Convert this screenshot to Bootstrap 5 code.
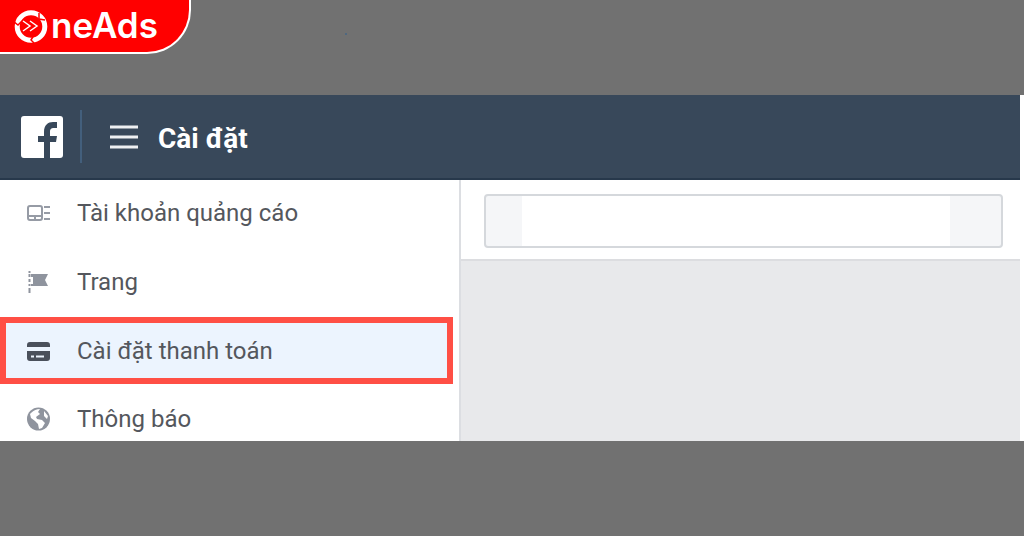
<!DOCTYPE html>
<html lang="vi">
<head>
<meta charset="utf-8">
<meta name="viewport" content="width=device-width, initial-scale=1">
<title>Cài đặt</title>
<link href="https://cdn.jsdelivr.net/npm/bootstrap@5.3.0/dist/css/bootstrap.min.css" rel="stylesheet">
<style>
  body { background: #717171; font-family: Roboto, "Liberation Sans", sans-serif; }
  .brand-strip { height: 95px; }
  .brand-tab { background: #f00; border: solid #fff; border-width: 0 2px 2px 0; border-radius: 0 0 44px 0; height: 54px; width: 191px; padding-left: 13px; color: #fff; font: 600 35px/50px Inter, sans-serif; }
  .brand-tab svg { margin-top: 8px; }
  .brand-tab span { margin-left: 2px; }
  .strip-dot { width: 2px; height: 2px; margin: 33px 0 0 154px; background: #4f6880; }
  .panel { border-right: 4px solid #fff; background: #fff; }
  .topbar { background: #38485a; border-bottom: 2px solid #27384b; height: 85px; padding-left: 20px; }
  .topbar-rule { width: 2px; height: 53px; background: #435f7c; margin: 0 28px 0 16px; }
  .menu-btn { line-height: 0; margin-right: 20px; }
  .topbar h1 { font-size: 28px; line-height: 36px; padding-top: 4px; color: #fff; }
  .side { width: 45.2%; border-right: 2px solid #dcdee2; }
  .side a { height: 69px; padding: 0 26px 2px; gap: 26px; color: #54575d; font-size: 24px; }
  .side a:first-child { height: 68px; }
  .side a.active { height: 67px; margin: 0 6px 2px 0; padding: 0 20px; border: 6px solid #ff4f45; background: #ecf4fe; }
  .side a:last-child { height: 55px; padding-bottom: 0; padding-top: 10px; }
  .search-row { padding: 14px 17px 11px 23px; border-bottom: 2px solid #dcdde0; }
  .search-row .input-group { height: 54px; border: 2px solid #d5d8dc; border-radius: 4px; overflow: hidden; background: #f5f6f8; }
  .search-row .form-control { margin: 0 51px 0 36px; }
  .main-area { background: #e8e9eb; }
</style>
</head>
<body class="min-vh-100">
<header class="brand-strip d-flex align-items-start">
  <div class="brand-tab d-flex align-items-start">
    <svg width="36" height="36" viewBox="0 0 36 36" fill="none" stroke="#fff" aria-hidden="true">
      <circle cx="18" cy="18.500" r="13.800" stroke-width="5"/>
      <path d="M0 13l5 4 4-4M26 5l0 6 6 1M22 36l-4-4 3-5" stroke="#f00" stroke-width="1.500"/>
      <path d="M10 13l7 5-7 5M17 13l7 5-7 5" stroke-width="1.500"/>
    </svg>
    <span>neAds</span>
  </div>
  <div class="strip-dot"></div>
</header>
<div class="panel">
  <div class="topbar d-flex align-items-center">
    <a href="#" aria-label="Facebook" class="lh-1">
      <svg width="44" height="44" viewBox="0 0 44 44" class="d-block"><rect x="1" y="1" width="42" height="42" rx="3" fill="#fff"/><path d="M24 43V27h-6v-6h6v-4c0-7 4-10 9-10h4v6h-3c-3 0-4 1-4 4v4h7l-1 6h-6v16z" fill="#38485a"/></svg>
    </a>
    <div class="topbar-rule"></div>
    <button type="button" class="menu-btn btn p-0 border-0" aria-label="Menu">
      <svg width="28" height="24" stroke="#eef0f2" stroke-width="3"><path d="M0 2h28M0 12h28M0 22h28"/></svg>
    </button>
    <h1 class="mb-0 fw-bold">Cài đặt</h1>
  </div>
  <div class="d-flex">
    <nav class="side flex-shrink-0">
      <a href="#" class="d-flex align-items-center text-decoration-none">
        <svg width="25" height="24" fill="none" stroke="#969ba5" stroke-width="2"><rect x="2" y="5" width="14" height="14" rx="2"/><path d="M2 15h14M18 6h6M18 12h6M18 18h6M9 15v3"/></svg>
        Tài khoản quảng cáo</a>
      <a href="#" class="d-flex align-items-center text-decoration-none">
        <svg width="25" height="24"><path d="M5 4h17l-3 6 3 6H5v-2h2V7H5z" fill="#8f949e"/><path d="M3.500 1v2M3.500 4v3M3.500 9v3M3.500 14v2M3.500 18v5" stroke="#8f949e" stroke-width="2"/></svg>
        Trang</a>
      <a href="#" class="active d-flex align-items-center text-decoration-none" aria-current="page">
        <svg width="25" height="24"><path d="M1 8V6q0-3 3-3h17q3 0 3 3v2zM1 12h23v7q0 3-3 3H4q-3 0-3-3z" fill="#4a505b"/><path d="M5 17.500h3M10 17.500h8" stroke="#ecf4fe" stroke-width="2"/></svg>
        Cài đặt thanh toán</a>
      <a href="#" class="d-flex align-items-center text-decoration-none">
        <svg width="25" height="24"><circle cx="12.500" cy="12" r="11.500" fill="#8f949e"/><path d="M5 6q4-4 9-4l-2 3 2 2-4 3 1 2 5 1 3 3-3 5-3 1-1-5-3-3-4-3-1-4zM18 4l4 5-1 3-3-3z" fill="#fff"/></svg>
        Thông báo</a>
    </nav>
    <main class="flex-fill d-flex flex-column">
      <div class="search-row">
        <div class="input-group">
          <input type="text" class="form-control border-0 rounded-0" aria-label="Tài khoản">
        </div>
      </div>
      <div class="main-area flex-fill"></div>
    </main>
  </div>
</div>
</body>
</html>
